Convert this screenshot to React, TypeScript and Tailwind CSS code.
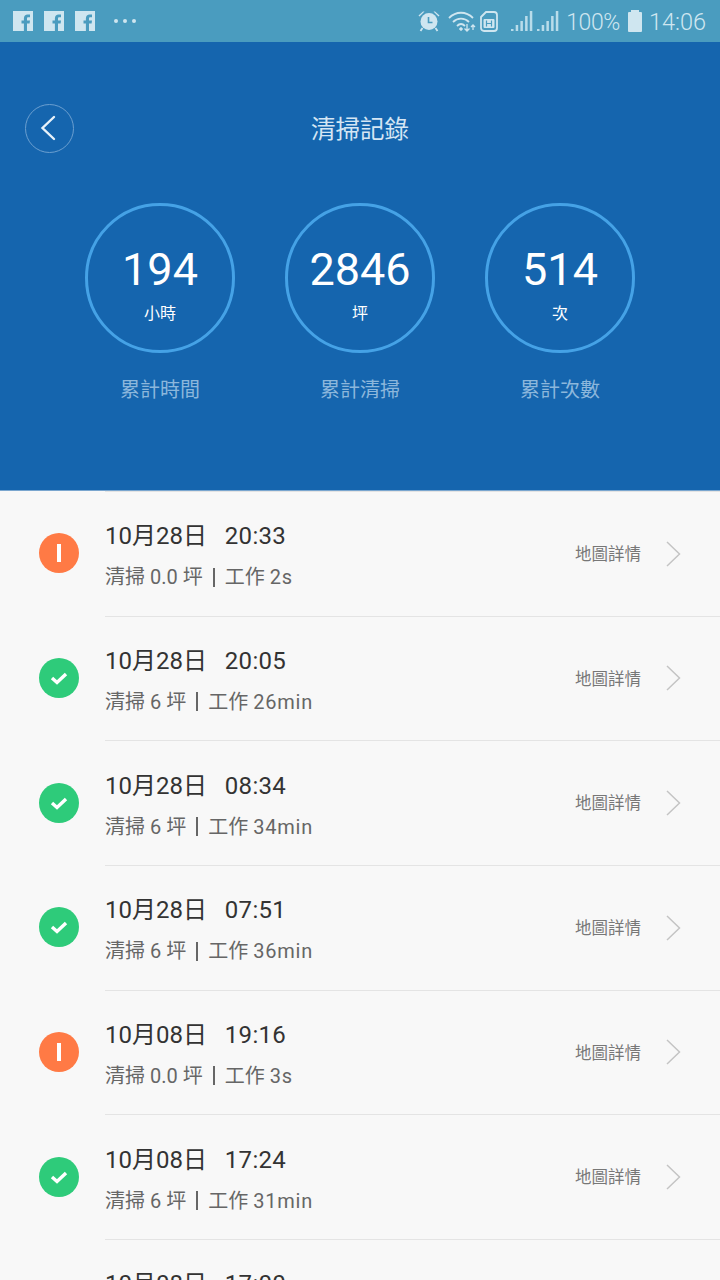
const STATS = [
  { value: "194", unit: "小時", label: "累計時間" },
  { value: "2846", unit: "坪", label: "累計清掃" },
  { value: "514", unit: "次", label: "累計次數" },
];

const RECORDS = [
  { date: "10月28日", time: "20:33", area: "0.0", work: "2s", ok: false },
  { date: "10月28日", time: "20:05", area: "6", work: "26min", ok: true },
  { date: "10月28日", time: "08:34", area: "6", work: "34min", ok: true },
  { date: "10月28日", time: "07:51", area: "6", work: "36min", ok: true },
  { date: "10月08日", time: "19:16", area: "0.0", work: "3s", ok: false },
  { date: "10月08日", time: "17:24", area: "6", work: "31min", ok: true },
  { date: "10月08日", time: "17:00", area: "6", work: "20min", ok: true },
];

function FacebookIcon() {
  return (
    <svg width="20" height="20" viewBox="0 0 20 20">
      <path
        d="M0 0h20v20h-6v-7.500h2.600l.4-3h-3V7.700c0-.9.300-1.400 1.500-1.400H17V3.600c-.3 0-1.200-.1-2.300-.1-2.300 0-3.800 1.400-3.800 3.900v2.100H8.500v3h2.400V20H0z"
        fill="#cfe6f0"
      />
    </svg>
  );
}

function SignalIcon() {
  return (
    <svg width="22" height="22" viewBox="0 0 22 22" fill="#b9dcea">
      <rect x="0" y="19" width="2.500" height="2" />
      <rect x="4.700" y="15" width="2.500" height="6" />
      <rect x="9.400" y="11" width="2.500" height="10" />
      <rect x="14.100" y="6" width="2.500" height="15" />
      <rect x="18.800" y="1" width="2.500" height="20" />
    </svg>
  );
}

function StatusBar() {
  return (
    <div className="flex h-[42px] items-center justify-between bg-[#4a9cbf] pl-[13px] pr-[14px]">
      <div className="flex items-center gap-[11px]">
        <FacebookIcon />
        <FacebookIcon />
        <FacebookIcon />
        <div className="ml-[8px] flex gap-[5px]">
          <span className="size-[4px] rounded-full bg-[#cfe6f0]" />
          <span className="size-[4px] rounded-full bg-[#cfe6f0]" />
          <span className="size-[4px] rounded-full bg-[#cfe6f0]" />
        </div>
      </div>
      <div className="flex items-center text-[#cfe6f0]">
        {/* alarm */}
        <svg width="22" height="22" viewBox="0 0 22 22" fill="none">
          <circle cx="11" cy="11.500" r="8.500" fill="#cfe6f0" />
          <path d="M0.500 5.500l4.500-4h1.500L1.500 6.500zM21.500 5.500l-4.500-4h-1.500L20.500 6.500z" fill="#cfe6f0" />
          <path d="M4.500 18l-2 3M17.500 18l2 3" stroke="#cfe6f0" strokeWidth="1.800" />
          <path d="M10.500 7v5.500h4" stroke="#4a9cbf" strokeWidth="1.600" />
        </svg>
        {/* wifi */}
        <svg className="ml-[8px]" width="30" height="24" viewBox="0 0 30 24" fill="none" stroke="#cfe6f0">
          <path d="M1 9c7-7 17-7 24 0" strokeWidth="1.800" />
          <path d="M5 13c4.500-4.500 11.500-4.500 16 0" strokeWidth="1.800" />
          <path d="M9 17c2.500-2.500 5.500-2.500 8 0" strokeWidth="1.800" />
          <circle cx="13" cy="20" r="1.300" fill="#cfe6f0" />
          <path d="M19 15v7m-2.500-2.500L19 22l2.500-2.500M25 21v-5m-2 2l2-2 2 2" strokeWidth="1.300" />
        </svg>
        {/* sim */}
        <svg className="ml-[2px]" width="18" height="22" viewBox="0 0 18 22" fill="none">
          <path d="M1 7l5-5h8a3 3 0 0 1 3 3v13a3 3 0 0 1-3 3H4a3 3 0 0 1-3-3z" stroke="#cfe6f0" strokeWidth="1.800" />
          <rect x="3.500" y="9" width="11" height="9" rx="1" fill="#cfe6f0" />
          <path d="M6.500 10.500v6M11.500 10.500v6M6.500 13.500h5" stroke="#4a9cbf" strokeWidth="1.200" />
        </svg>
        <div className="ml-[13px] flex items-center gap-[4px]">
          <SignalIcon />
          <SignalIcon />
        </div>
        <span className="mt-[3px] ml-[7px] font-['Roboto',sans-serif] text-[23px] leading-none font-light tracking-[-0.4px]">100%</span>
        <span className="relative mt-[1px] ml-[8px] h-[20px] w-[14px] rounded-[1px] bg-[#cfe6f0]">
          <span className="absolute -top-[2px] left-[3px] h-[2px] w-[8px] bg-[#cfe6f0]" />
        </span>
        <span className="mt-[3px] ml-[7px] font-['Roboto',sans-serif] text-[23.500px] leading-none font-light">14:06</span>
      </div>
    </div>
  );
}

function Header() {
  return (
    <div className="h-[449px] border-b border-[#7aa6cf] bg-[#1565ae] pt-[62px]">
      <div className="relative flex h-[49px] items-center justify-center">
        <div className="absolute top-0 left-[25px] flex size-[49px] items-center justify-center rounded-full border border-[#6b9fd0]">
          <svg className="mr-[3px] mb-[1px]" width="16" height="26" viewBox="0 0 16 26" fill="none">
            <path d="M14 2L2.500 13 14 24" stroke="#e8f2fa" strokeWidth="2.400" strokeLinecap="round" />
          </svg>
        </div>
        <h1 className="pt-[3px] text-[24.500px] leading-none font-normal text-[#d5e6f4]">清掃記錄</h1>
      </div>
      <div className="mt-[50px] flex justify-center gap-[50px]">
        {STATS.map((stat) => (
          <div key={stat.label} className="flex w-[150px] flex-col items-center">
            <div className="flex size-[150px] flex-col items-center rounded-full border-[3px] border-[#45a2e6] pt-[36px] text-white">
              <span className="font-['Roboto',sans-serif] text-[45px] leading-[56px] font-normal">{stat.value}</span>
              <span className="mt-[6px] text-[16px] leading-[20px]">{stat.unit}</span>
            </div>
            <span className="mt-[23px] text-[20px] leading-[28px] text-[#8cb7dc]">{stat.label}</span>
          </div>
        ))}
      </div>
    </div>
  );
}

function StatusIcon({ ok }: { ok: boolean }) {
  if (ok) {
    return (
      <div className="flex size-[40px] shrink-0 items-center justify-center rounded-full bg-[#2ecb7a]">
        <svg width="20" height="16" viewBox="0 0 20 16" fill="none">
          <path d="M3 8l5 4.500 9-8.500" stroke="#fff" strokeWidth="3.400" />
        </svg>
      </div>
    );
  }
  return (
    <div className="flex size-[40px] shrink-0 items-center justify-center rounded-full bg-[#ff7a45]">
      <span className="h-[18px] w-[4px] bg-white" />
    </div>
  );
}

function RecordRow({ record }: { record: (typeof RECORDS)[number] }) {
  return (
    <div className="flex h-[124.67px] items-center pl-[39px]">
      <StatusIcon ok={record.ok} />
      <div className="ml-[26px] flex h-full flex-1 items-center border-t border-[#e4e4e4] pr-[39px]">
        <div className="flex-1 pt-[4px]">
          <div className="whitespace-pre text-[24px] leading-[32px] text-[#333333]">
            {record.date}
            {"   "}
            <span className="tracking-[0.3px]">{record.time}</span>
          </div>
          <div className="mt-[11px] flex items-center whitespace-pre text-[20px] leading-[28px] text-[#666666]">
            <span>清掃 {record.area} 坪</span>
            <span className="mx-[10px] h-[19px] w-[2px] bg-[#666666]" />
            <span>工作 </span>
            <span className="tracking-[0.8px]">{record.work}</span>
          </div>
        </div>
        <span className="mt-[3px] text-[16.500px] text-[#777777]">地圖詳情</span>
        <svg className="ml-[25px]" width="15" height="26" viewBox="0 0 15 26" fill="none">
          <path d="M1 1l12.500 12L1 25" stroke="#c4c4c4" strokeWidth="1.500" />
        </svg>
      </div>
    </div>
  );
}

export default function App() {
  return (
    <div className="h-[1280px] w-[720px] overflow-hidden bg-[#f8f8f8] font-['Roboto','Noto_Sans_CJK_TC',sans-serif]">
      <StatusBar />
      <Header />
      <div>
        {RECORDS.map((record) => (
          <RecordRow key={record.date + record.time} record={record} />
        ))}
      </div>
    </div>
  );
}
